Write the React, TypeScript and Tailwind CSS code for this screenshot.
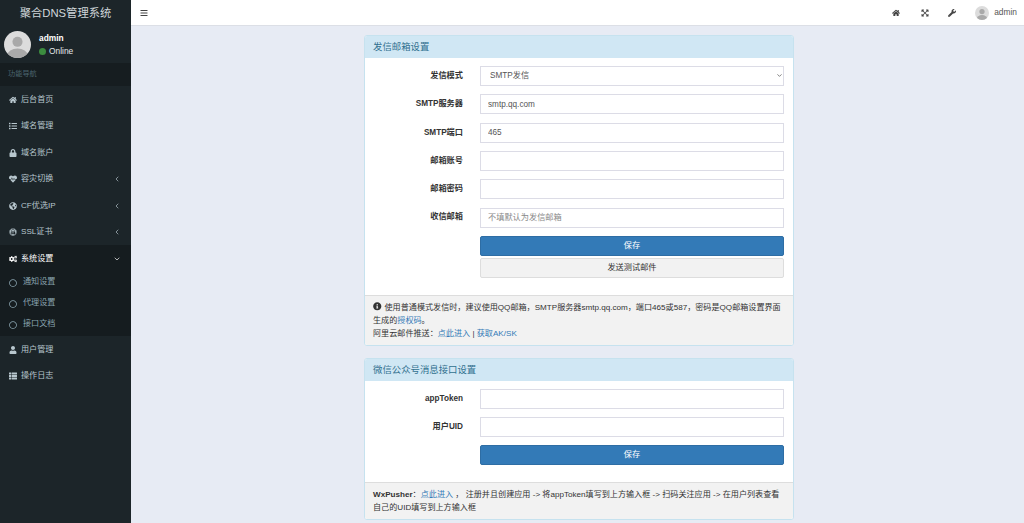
import type { ReactNode } from "react";
import { ChevronDown, ChevronLeft } from "lucide-react";
import { FaBars, FaCogs, FaExpandArrowsAlt, FaExpeditedssl, FaGlobeAmericas, FaHeartbeat, FaHome, FaInfoCircle, FaList, FaLock, FaRegCircle, FaThList, FaUser, FaWrench } from "react-icons/fa";

const font = "font-['Liberation_Sans','Noto_Sans_CJK_SC',sans-serif]";

const Avatar = ({ className }: { className: string }) => (
  <svg viewBox="0 0 40 40" className={className}>
    <clipPath id="av">
      <circle cx="20" cy="20" r="20" />
    </clipPath>
    <g clipPath="url(#av)">
      <rect width="40" height="40" fill="#dcdcdc" />
      <circle cx="20" cy="16" r="7.5" fill="#a9a9a9" />
      <ellipse cx="20" cy="36" rx="15" ry="10" fill="#a9a9a9" />
    </g>
  </svg>
);

const NavItem = ({ icon, label, arrow }: { icon: ReactNode; label: string; arrow?: boolean }) => (
  <div className="flex h-[26.5px] items-center pl-[8px] pr-[10px] pt-[1px] text-[8.1px] text-[#b8c7ce]">
    <span className="flex w-[10px] justify-center text-[8px]">{icon}</span>
    <span className="ml-[3px] flex-1">{label}</span>
    {arrow && <ChevronLeft size={8} strokeWidth={2} />}
  </div>
);

const SubItem = ({ label }: { label: string }) => (
  <div className="flex h-[21px] items-center pl-[9px] text-[8.1px] text-[#8aa4af]">
    <FaRegCircle className="text-[8px]" />
    <span className="ml-[6px]">{label}</span>
  </div>
);

const Row = ({ label, children }: { label: string; children: ReactNode }) => (
  <div className="flex h-[20px] items-center">
    <label className="w-[98px] text-right text-[8.2px] font-bold text-[#333]">{label}</label>
    <div className="ml-[17px] flex-1">{children}</div>
  </div>
);

const inputCls =
  "block h-[20px] w-full border border-[#dcdce6] bg-white px-[7px] text-[8.2px] text-[#555] outline-none placeholder:text-[#888]";

const SaveButton = () => (
  <button className="block h-[20px] w-full rounded-[2px] border border-[#2e6da4] bg-[#337ab7] text-[8.2px] text-white">保存</button>
);

const Panel = ({ title, children, footer }: { title: string; children: ReactNode; footer: ReactNode }) => (
  <section className="rounded-[3px] border border-[#c6e2ef] bg-white">
    <div className="flex h-[22px] items-center rounded-t-[2px] bg-[#d0e7f4] px-[8px] text-[9.4px] text-[#31708f]">{title}</div>
    {children}
    <div className="rounded-b-[2px] border-t border-[#dddddd] bg-[#f2f2f2] px-[8px] py-[5px] text-[8.1px] leading-[13px] text-[#333]">{footer}</div>
  </section>
);

const Link = ({ children }: { children: ReactNode }) => <a className="text-[#337ab7]">{children}</a>;

export default function App() {
  return (
    <div className={`flex h-screen overflow-hidden bg-[#e7ebf4] ${font}`}>
      <aside className="w-[131px] shrink-0 bg-[#1c2529]">
        <div className="flex h-[26px] items-center justify-center text-[11.3px] text-[#cfd6d9]">聚合DNS管理系统</div>
        <div className="flex h-[37px] items-center pl-[4px]">
          <Avatar className="h-[27px] w-[27px]" />
          <div className="ml-[8px]">
            <div className="text-[8.4px] font-bold leading-[13px] text-white">admin</div>
            <div className="flex items-center text-[8.4px] leading-[13px] text-[#e4e8ea]">
              <span className="mr-[3px] h-[7px] w-[7px] rounded-full bg-[#3c8c3f]" />
              Online
            </div>
          </div>
        </div>
        <div className="flex h-[23px] items-center bg-[#161d20] pl-[8px] text-[7.2px] text-[#4b646f]">功能导航</div>
        <NavItem icon={<FaHome />} label="后台首页" />
        <NavItem icon={<FaList />} label="域名管理" />
        <NavItem icon={<FaLock />} label="域名账户" />
        <NavItem icon={<FaHeartbeat />} label="容灾切换" arrow />
        <NavItem icon={<FaGlobeAmericas />} label="CF优选IP" arrow />
        <NavItem icon={<FaExpeditedssl />} label="SSL证书" arrow />
        <div className="bg-[#151c1f] pb-[1px]">
          <div className="flex h-[27px] items-center pl-[8px] pr-[10px] pt-[1px] text-[8.1px] text-white">
            <span className="flex w-[10px] justify-center text-[8px]">
              <FaCogs />
            </span>
            <span className="ml-[3px] flex-1">系统设置</span>
            <ChevronDown size={8} strokeWidth={2} />
          </div>
          <SubItem label="通知设置" />
          <SubItem label="代理设置" />
          <SubItem label="接口文档" />
        </div>
        <NavItem icon={<FaUser />} label="用户管理" />
        <NavItem icon={<FaThList />} label="操作日志" />
      </aside>

      <div className="flex min-w-0 flex-1 flex-col">
        <header className="flex h-[26px] shrink-0 items-center border-b border-[#dcdfe6] bg-white pl-[9px] pr-[7px] text-[#444]">
          <FaBars className="text-[8px]" />
          <div className="ml-auto flex items-center">
            <FaHome className="text-[8px]" />
            <FaExpandArrowsAlt className="ml-[21px] text-[8px]" />
            <FaWrench className="ml-[19px] text-[8px]" />
            <Avatar className="ml-[19px] h-[14px] w-[14px]" />
            <span className="ml-[5px] text-[8.4px] text-[#555]">admin</span>
          </div>
        </header>

        <main className="ml-[233px] mt-[9px] flex w-[430px] flex-col gap-[12px]">
          <Panel
            title="发信邮箱设置"
            footer={
              <>
                <FaInfoCircle className="mr-[3px] inline align-[-1px] text-[8.5px]" />
                使用普通模式发信时，建议使用QQ邮箱，SMTP服务器smtp.qq.com，端口465或587，密码是QQ邮箱设置界面生成的<Link>授权码</Link>。
                <br />
                阿里云邮件推送：<Link>点此进入</Link> | <Link>获取AK/SK</Link>
              </>
            }
          >
            <div className="flex flex-col gap-[8.33px] pb-[17px] pr-[9px] pt-[8px]">
              <Row label="发信模式">
                <div className="relative">
                  <select className="block h-[20px] w-full appearance-none border border-[#dcdce6] bg-white pl-[9px] text-[8.2px] text-[#555] outline-none">
                    <option>SMTP发信</option>
                  </select>
                  <ChevronDown size={7} strokeWidth={2.5} className="pointer-events-none absolute right-[1px] top-[6px] text-[#555]" />
                </div>
              </Row>
              <Row label="SMTP服务器">
                <input className={inputCls} defaultValue="smtp.qq.com" />
              </Row>
              <Row label="SMTP端口">
                <input className={inputCls} defaultValue="465" />
              </Row>
              <Row label="邮箱账号">
                <input className={inputCls} />
              </Row>
              <Row label="邮箱密码">
                <input className={inputCls} />
              </Row>
              <Row label="收信邮箱">
                <input className={inputCls} placeholder="不填默认为发信邮箱" />
              </Row>
              <div className="ml-[115px] flex flex-col gap-[2px]">
                <SaveButton />
                <button className="block h-[20px] w-full rounded-[2px] border border-[#dddddd] bg-[#f2f2f2] text-[8.2px] text-[#333]">发送测试邮件</button>
              </div>
            </div>
          </Panel>

          <Panel
            title="微信公众号消息接口设置"
            footer={
              <>
                <b>WxPusher</b>：<Link>点此进入</Link> ， 注册并且创建应用 -&gt; 将appToken填写到上方输入框 -&gt; 扫码关注应用 -&gt; 在用户列表查看自己的UID填写到上方输入框
              </>
            }
          >
            <div className="flex flex-col gap-[8px] pb-[17px] pr-[9px] pt-[8px]">
              <Row label="appToken">
                <input className={inputCls} />
              </Row>
              <Row label="用户UID">
                <input className={inputCls} />
              </Row>
              <div className="ml-[115px]">
                <SaveButton />
              </div>
            </div>
          </Panel>
        </main>
      </div>
    </div>
  );
}
